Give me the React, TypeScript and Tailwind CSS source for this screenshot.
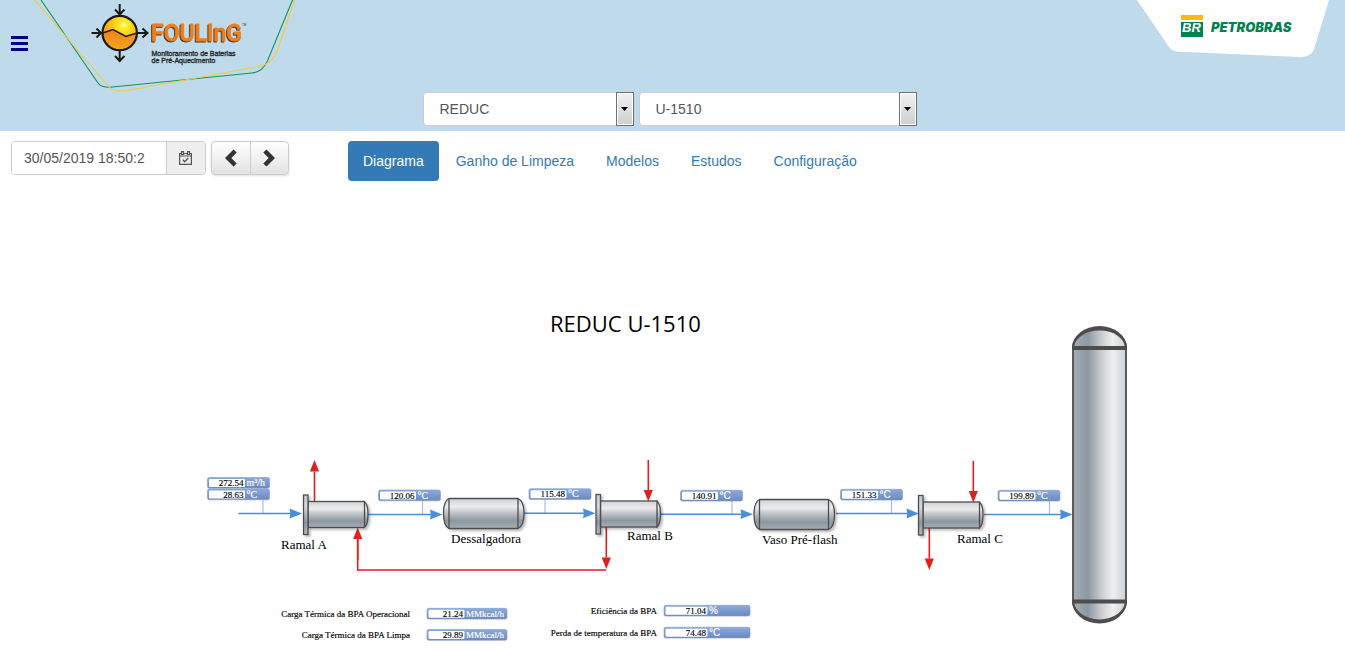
import { useState } from "react";

const SERIF = "font-['Liberation_Serif',serif]";

function FoulingLogo() {
  return (
    <svg viewBox="34 0 262 92" className="block h-[92px] w-[262px] shrink-0" role="img" aria-label="Fouling">
      <defs>
        <radialGradient id="ball" cx="0.62" cy="0.26" r="0.75">
          <stop offset="0" stopColor="#fffbd0" />
          <stop offset="0.12" stopColor="#ffee30" />
          <stop offset="0.5" stopColor="#fdc40c" />
          <stop offset="1" stopColor="#ee8c14" />
        </radialGradient>
        <linearGradient id="ballBase" x1="0" y1="0" x2="0" y2="1">
          <stop offset="0" stopColor="#ec8420" />
          <stop offset="1" stopColor="#f6a51c" />
        </linearGradient>
      </defs>
      <path d="M41 0 L98 83 Q101 87.5 110 87.3 L252 73 Q262 72 267 62 L292.5 0" fill="none" stroke="#14935a" strokeWidth="1.1" />
      <path d="M34.5 0 L109 87 Q113 91.3 125 91 L260 66.300 Q272 64 277.500 50 L294.500 0" fill="none" stroke="#f6c83c" strokeWidth="1.1" />
      <circle cx="119.700" cy="33" r="17" fill="url(#ball)" />
      <path d="M102.700 33 L113 29.500 L126 36.500 L136.700 33 A17 17 0 0 1 102.700 33 Z" fill="url(#ballBase)" />
      <g fill="none" stroke="#1c1a17" strokeWidth="2">
        <circle cx="119.700" cy="33" r="17.200" strokeWidth="2.200" />
        <path d="M102.700 33 L113 29.500 L126 36.500 L136.700 33" strokeWidth="1.500" />
        <path d="M91.500 33 H101 M96.500 28.500 L101 33 L96.500 37.500" />
        <path d="M137 33 H147.500 M142.500 28.500 L147.500 33 L142.500 37.500" />
        <path d="M119.700 4 V14.500 M115 9.500 L119.700 14.500 L124.400 9.500" />
        <path d="M119.700 51 V61 M115 56 L119.700 61 L124.400 56" />
      </g>
      <text x="151" y="41" fontSize="23" fill="#ee7f1a" stroke="#ee7f1a" strokeWidth="0.8" strokeLinejoin="round" className="font-['Roboto',sans-serif] font-medium drop-shadow-[-1px_1px_0_#4a3a2c]">FOULInG</text>
      <text x="242" y="26" fontSize="3" fill="#333" className="font-['Liberation_Sans',sans-serif]">TM</text>
      <g fontSize="7" fill="#222" stroke="#222" strokeWidth="0.3" className="font-['Liberation_Sans',sans-serif]">
        <text x="151.500" y="55.500">Monitoramento de Baterias</text>
        <text x="151.500" y="63">de Pré-Aquecimento</text>
      </g>
    </svg>
  );
}

function PetrobrasLogo() {
  return (
    <svg viewBox="1137 0 193 58" className="mr-[15px] ml-auto block h-[58px] w-[193px] shrink-0" role="img" aria-label="Petrobras">
      <path d="M1137 0 L1169 47 Q1172 51.500 1180 51.800 L1300 57 Q1311 57.500 1314 49 L1329 0 Z" fill="#fff" />
      <rect x="1181" y="15" width="22" height="5" fill="#fdb913" />
      <rect x="1181" y="22" width="22" height="15" fill="#00834f" />
      <text x="1182" y="32" fontSize="13" fill="#fff" className="font-['Liberation_Sans',sans-serif] font-bold italic">BR</text>
      <text x="1211" y="32" fontSize="13" fill="#00834f" className="font-['Inter',sans-serif] font-black italic">PETROBRAS</text>
    </svg>
  );
}

function UnitSelect({ label, options, width }: { label: string; options: string[]; width: string }) {
  return (
    <div className={`relative ${width}`}>
      <select aria-label={label} className="block h-[34px] w-full appearance-none rounded border border-[#ccc] bg-white pr-6 pl-4 text-sm text-[#555]">
        {options.map((o) => (
          <option key={o}>{o}</option>
        ))}
      </select>
      <span className="pointer-events-none absolute top-0 right-0 flex h-[34px] w-[18px] items-center justify-center border border-[#707070] bg-linear-to-b from-[#f2f2f2] to-[#cfcfcf] shadow-[inset_0_0_0_1px_#fff]">
        <svg viewBox="0 0 7 4" className="h-1 w-[7px]">
          <path d="M0 0 H7 L3.500 4 Z" fill="#000" />
        </svg>
      </span>
    </div>
  );
}

function CalendarCheck() {
  return (
    <svg viewBox="0 0 13 14" className="mr-0.5 h-3.5 w-[13px]" fill="none" stroke="#555" strokeWidth="1.2">
      <path d="M0.600 2.500 H12.400 V13.400 H0.600 Z M0.600 5 H12.400" />
      <path d="M2.500 0.600 H4.500 V3.500 H2.500 Z M8.500 0.600 H10.500 V3.500 H8.500 Z" fill="#eee" />
      <path d="M3.800 8.700 L5.700 10.700 L9.300 7" strokeWidth="1.400" />
    </svg>
  );
}

function Chevron({ right = false }: { right?: boolean }) {
  return (
    <svg viewBox="0 0 12 18" className="h-[18px] w-3">
      <path
        d={right ? "M3.500 0.500 L12 9 L3.500 17.500 L0.300 14.400 L5.700 9 L0.300 3.600 Z" : "M8.500 0.500 L0 9 L8.500 17.500 L11.700 14.400 L6.300 9 L11.700 3.600 Z"}
        fill="#333"
      />
    </svg>
  );
}

type TagProps = { x: number; y: number; value: string; unit: string; w?: number; field?: number; sans?: boolean };

function Tag({ x, y, value, unit, w = 62, field = 36, sans = false }: TagProps) {
  return (
    <g>
      <rect x={x} y={y} width={w} height="10.800" rx="1.800" fill="url(#tag)" stroke="#7d9acb" strokeWidth="0.600" />
      <rect x={x + 1.5} y={y + 1.5} width={field} height="8" rx="1.200" fill="#fff" />
      <text x={x + field} y={y + 8.5} textAnchor="end" fontSize="9" fill="#000" stroke="#000" strokeWidth="0.150">{value}</text>
      <text x={x + field + 3} y={y + 8.5} fontSize={unit.length > 4 ? 9 : 10} fill="#fff" stroke="#fff" strokeWidth="0.150" className={sans ? "font-['Liberation_Sans',sans-serif]" : ""}>{unit}</text>
    </g>
  );
}

function Exchanger({ x, y }: { x: number; y: number }) {
  return (
    <g transform={`translate(${x} ${y})`} stroke="#4d4d4d" strokeWidth="1.300" className="drop-shadow-[2px_2px_1px_#00000040]">
      <path d="M61 7 Q65 9 65 20 Q65 31 61 33 Z" fill="url(#metal)" />
      <rect x="5" y="7" width="56.500" height="26" fill="url(#metal)" />
      <rect x="0.500" y="0.500" width="4.500" height="39.500" fill="url(#flange)" />
    </g>
  );
}

function Vessel({ x, y }: { x: number; y: number }) {
  return (
    <g transform={`translate(${x} ${y})`} stroke="#4d4d4d" strokeWidth="1.300" className="drop-shadow-[2px_2px_1px_#00000040]">
      <path d="M6 0.500 H75 Q81 3 81 15.500 Q81 28 75 30.500 H6 Q0.500 28 0.500 15.500 Q0.500 3 6 0.500 Z" fill="url(#metal)" />
      <path d="M6 0.500 V30.500 M75 0.500 V30.500" />
    </g>
  );
}

function Flow({ from, to, y }: { from: number; to: number; y: number }) {
  return (
    <g fill="#4a8edb">
      <path d={`M${from} ${y} H${to - 8}`} stroke="#4a8edb" strokeWidth="1.600" />
      <path d={`M${to} ${y} L${to - 12.5} ${y - 4.9} L${to - 11.7} ${y} L${to - 12.5} ${y + 4.9} Z`} />
    </g>
  );
}

function Side({ x, from, to }: { x: number; from: number; to: number }) {
  const back = to > from ? -11.5 : 11.5;
  return (
    <g fill="#e01f1f">
      <path d={`M${x} ${from} V${to + back}`} stroke="#e01f1f" strokeWidth="1.600" />
      <path d={`M${x} ${to} L${x - 4.6} ${to + back} H${x + 4.6} Z`} />
    </g>
  );
}

const taps: [number, number, number][] = [
  [263, 499, 513],
  [422.5, 500, 514],
  [545, 499, 513],
  [732, 501, 514],
  [891.5, 500, 513],
  [1049.5, 501, 514],
];

function ProcessDiagram() {
  return (
    <svg viewBox="0 181 1345 469" className={`block w-full ${SERIF}`} role="img" aria-label="Diagrama REDUC U-1510">
      <defs>
        <linearGradient id="metal" x1="0" y1="0" x2="0" y2="1">
          <stop offset="0" stopColor="#cdd2d5" />
          <stop offset="0.280" stopColor="#ececed" />
          <stop offset="0.450" stopColor="#c4c8cb" />
          <stop offset="0.750" stopColor="#8c97a0" />
          <stop offset="1" stopColor="#a7afb6" />
        </linearGradient>
        <linearGradient id="flange" x1="0" y1="0" x2="0" y2="1">
          <stop offset="0" stopColor="#c2c7cb" />
          <stop offset="0.300" stopColor="#d5d8da" />
          <stop offset="0.700" stopColor="#8c97a0" />
          <stop offset="1" stopColor="#b5bcc1" />
        </linearGradient>
        <linearGradient id="tower" x1="0" y1="0" x2="1" y2="0">
          <stop offset="0" stopColor="#a5adb4" />
          <stop offset="0.280" stopColor="#8d98a2" />
          <stop offset="0.500" stopColor="#c2c6c9" />
          <stop offset="0.750" stopColor="#efefef" />
          <stop offset="1" stopColor="#ccd2d5" />
        </linearGradient>
        <linearGradient id="tag" x1="0" y1="0" x2="0" y2="1">
          <stop offset="0" stopColor="#8ba9dc" />
          <stop offset="1" stopColor="#6c8abb" />
        </linearGradient>
      </defs>

      <text x="550" y="332" fontSize="22" fill="#000" className="font-['Open_Sans',sans-serif]">REDUC U-1510</text>

      <g stroke="#a9bfe6" strokeWidth="1.200">
        {taps.map(([x, a, b]) => (
          <path key={x} d={`M${x} ${a} V${b}`} />
        ))}
      </g>

      <Flow from={238.5} to={302} y={513.5} />
      <Flow from={368} to={442.5} y={514.5} />
      <Flow from={524} to={595.5} y={513.3} />
      <Flow from={660} to={753} y={514.2} />
      <Flow from={836} to={919} y={513.5} />
      <Flow from={984} to={1072.5} y={514.5} />

      <path d="M606 570 H357.700 V538" fill="none" stroke="#e01f1f" strokeWidth="1.600" />
      <Side x={314.5} from={502} to={460} />
      <Side x={357.7} from={560} to={527.5} />
      <Side x={606.3} from={527} to={569} />
      <Side x={929.3} from={528} to={570} />

      <Exchanger x={303} y={494.5} />
      <Exchanger x={595.5} y={494} />
      <Exchanger x={918} y={495} />
      <Side x={648.3} from={460} to={501.5} />
      <Side x={973.3} from={461} to={502.5} />
      <Vessel x={443} y={498} />
      <Vessel x={753.5} y={499} />

      <g stroke="#4d4d4d" fill="url(#tower)">
        <path d="M1073 348 A26.500 19.800 0 0 1 1126 348 Z" strokeWidth="1.800" />
        <path d="M1073 601 A26.500 21 0 0 0 1126 601 Z" strokeWidth="1.800" />
        <rect x="1073" y="348" width="53" height="253" strokeWidth="1.800" />
        <path d="M1072 348 H1127 M1072 601.500 H1127" strokeWidth="3.800" />
      </g>
      <g fill="#4d4d4d">
        <path d="M1072 348 A27.500 22 0 0 1 1127 348 H1125 A25.500 17.500 0 0 0 1074 348 Z" />
        <path d="M1072 601 A27.500 22.500 0 0 0 1127 601 H1125 A25.500 18.500 0 0 1 1074 601 Z" />
      </g>

      <Tag x={207.5} y={477.5} value="272.54" unit="m³/h" />
      <Tag x={207.5} y={489} value="28.63" unit="°C" />
      <Tag x={378.5} y={490} value="120.06" unit="°C" />
      <Tag x={529} y={488.700} value="115.48" unit="°C" />
      <Tag x={680.5} y={490.3} value="140.91" unit="°C" sans />
      <Tag x={840.5} y={489.300} value="151.33" unit="°C" sans />
      <Tag x={998} y={490.3} value="199.89" unit="°C" />

      <g fontSize="13" fill="#000">
        <text x="281" y="549">Ramal A</text>
        <text x="451" y="543">Dessalgadora</text>
        <text x="627" y="540">Ramal B</text>
        <text x="762" y="544">Vaso Pré-flash</text>
        <text x="957" y="543">Ramal C</text>
      </g>

      <g fontSize="9" fill="#000" stroke="#000" strokeWidth="0.150" textAnchor="end">
        <text x="410" y="617">Carga Térmica da BPA Operacional</text>
        <text x="410" y="638">Carga Térmica da BPA Limpa</text>
        <text x="657" y="614">Eficiência da BPA</text>
        <text x="657" y="636">Perda de temperatura da BPA</text>
      </g>
      <Tag x={427} y={608.3} w={80} value="21.24" unit="MMkcal/h" />
      <Tag x={427} y={629.5} w={80} value="29.89" unit="MMkcal/h" />
      <Tag x={664} y={605.3} w={86} field={42} value="71.04" unit="%" sans />
      <Tag x={664} y={627.2} w={86} field={42} value="74.48" unit="°C" sans />
    </svg>
  );
}

const tabs = ["Diagrama", "Ganho de Limpeza", "Modelos", "Estudos", "Configuração"];

export default function App() {
  const [active, setActive] = useState("Diagrama");
  return (
    <div className="min-h-screen bg-white font-['Liberation_Sans',Arial,sans-serif] text-sm">
      <header className="bg-[#bfdaeb] pb-[5px]">
        <div className="flex items-start">
          <button type="button" aria-label="Menu" className="mt-9 mr-1.5 ml-[11px] flex w-[17px] shrink-0 flex-col gap-[3px]">
            <span className="h-[3px] w-full bg-[#00008b]" />
            <span className="h-[3px] w-full bg-[#00008b]" />
            <span className="h-[3px] w-full bg-[#00008b]" />
          </button>
          <FoulingLogo />
          <PetrobrasLogo />
        </div>
        <div className="flex justify-center gap-[5px] pr-1.5">
          <UnitSelect label="Refinaria" options={["REDUC"]} width="w-[211px]" />
          <UnitSelect label="Unidade" options={["U-1510"]} width="w-[278px]" />
        </div>
      </header>

      <main>
        <div className="flex items-start px-[11px] pt-2.5">
          <div className="flex h-[34px] w-[195px] overflow-hidden rounded border border-[#ccc]">
            <input aria-label="Data e hora" defaultValue="30/05/2019 18:50:2" className="min-w-0 flex-1 bg-white px-3 text-sm text-[#555] outline-none" />
            <button type="button" aria-label="Abrir calendário" className="flex w-[39px] items-center justify-center border-l border-[#ccc] bg-[#eee]">
              <CalendarCheck />
            </button>
          </div>
          <div className="ml-[5px] flex h-[34px] w-[78px] overflow-hidden rounded border border-[#ccc] bg-linear-to-b from-white to-[#e2e2e2] shadow-sm">
            <button type="button" aria-label="Anterior" className="flex flex-1 items-center justify-center border-r border-[#ccc]">
              <Chevron />
            </button>
            <button type="button" aria-label="Próximo" className="flex flex-1 items-center justify-center">
              <Chevron right />
            </button>
          </div>
          <nav className="ml-[59px] flex gap-0.5">
            {tabs.map((t) => (
              <a
                key={t}
                href="#"
                onClick={() => setActive(t)}
                className={`rounded px-[15px] py-2.5 leading-5 ${t === active ? "bg-[#337ab7] text-white" : "text-[#337ab7]"}`}
              >
                {t}
              </a>
            ))}
          </nav>
        </div>
        <ProcessDiagram />
      </main>
    </div>
  );
}
